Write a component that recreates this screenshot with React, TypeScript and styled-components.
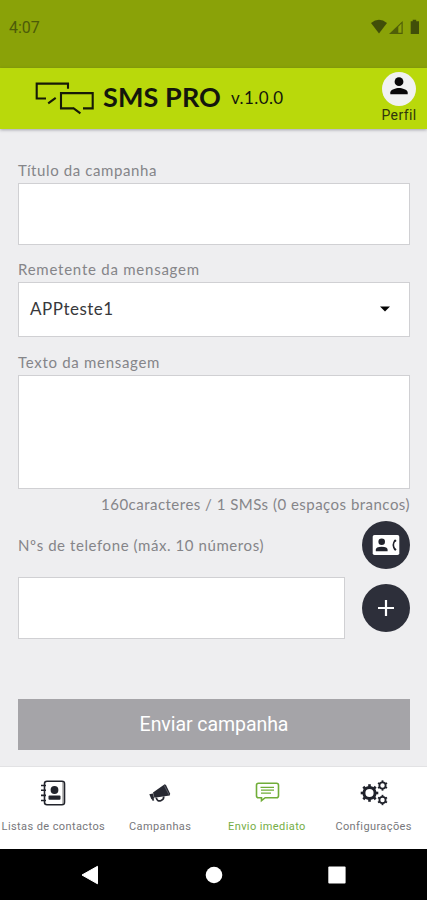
import React from "react";
import styled, { createGlobalStyle } from "styled-components";

const GlobalStyle = createGlobalStyle`
  * { box-sizing: border-box; }
  body { margin: 0; background: #eeeef0; }
`;

const Screen = styled.div`
  display: flex;
  flex-direction: column;
  width: 427px;
  height: 900px;
  overflow: hidden;
  background: #eeeef0;
  font-family: Lato, sans-serif;
`;

const StatusBar = styled.div`
  display: flex;
  justify-content: space-between;
  height: 68px;
  padding: 18px 7px 0 9px;
  background: #8aa208;
  color: #4d5b09;
  font: 16px/20px Roboto, sans-serif;
`;

const StatusIcons = styled.div`
  display: flex;
  height: 18px;
`;

const Header = styled.header`
  display: flex;
  align-items: flex-start;
  height: 61px;
  padding: 0 11px 0 35px;
  background: #b9d90b;
  color: #14160c;
  box-shadow: 0 1px 3px rgba(50, 50, 70, 0.4);
`;

const Logo = styled.svg`
  width: 60px;
  height: 34px;
  margin-top: 13px;
`;

const Brand = styled.h1`
  width: 128px;
  margin: 12px 0 0 8px;
  font: 700 27px/34px Lato, sans-serif;
  letter-spacing: 0.1px;
  white-space: nowrap;
`;

const Version = styled.span`
  margin-top: 20px;
  font-size: 17px;
  line-height: 20px;
  letter-spacing: 0.4px;
`;

const Profile = styled.div`
  display: flex;
  flex-direction: column;
  align-items: center;
  width: 34px;
  margin: 4px 0 0 auto;
  color: #2f360c;
  font: 14px/18px Roboto, sans-serif;
  letter-spacing: 0.4px;
`;

const Avatar = styled.span`
  display: flex;
  justify-content: center;
  width: 34px;
  height: 34px;
  border-radius: 50%;
  background: #f1f2f1;
`;

const Form = styled.main`
  display: flex;
  flex-direction: column;
  flex: 1;
  padding: 31px 17px 0 18px;
`;

const Label = styled.label<{ $spacing: number }>`
  height: 20px;
  font-size: 15px;
  line-height: 20px;
  letter-spacing: ${(p) => p.$spacing}px;
  color: #858589;
  white-space: nowrap;
`;

const Field = styled.div<{ $height: number; $gap: number }>`
  display: flex;
  align-items: center;
  justify-content: space-between;
  height: ${(p) => p.$height}px;
  margin: 3px 0 ${(p) => p.$gap}px;
  padding: 0 19px 2px 11px;
  border: 1px solid #d0d0d3;
  background: #fff;
  color: #38383b;
  font-size: 17px;
  letter-spacing: 0.5px;
`;

const Counter = styled.div`
  height: 20px;
  color: #858589;
  font-size: 15px;
  line-height: 20px;
  letter-spacing: 0.48px;
  text-align: right;
  white-space: nowrap;
`;

const PhoneLabelRow = styled.div`
  display: flex;
  align-items: center;
  justify-content: space-between;
  height: 48px;
  margin-top: 7px;
`;

const PhoneRow = styled.div`
  display: flex;
  align-items: center;
  justify-content: space-between;
  height: 62px;
  margin-top: 8px;
`;

const PhoneField = styled.div`
  width: 327px;
  height: 62px;
  border: 1px solid #d0d0d3;
  background: #fff;
`;

const RoundButton = styled.button`
  display: grid;
  place-items: center;
  width: 48px;
  height: 48px;
  padding: 0;
  border: 0;
  border-radius: 50%;
  background: #2d2f3a;
`;

const SubmitButton = styled.button`
  height: 51px;
  margin-top: 60px;
  padding: 0;
  border: 0;
  background: #a5a4a8;
  color: #fff;
  font: 19.5px/51px Roboto, sans-serif;
  letter-spacing: -0.06px;
`;

const TabBar = styled.nav`
  display: grid;
  grid-template-columns: repeat(4, 1fr);
  height: 83px;
  border-top: 1px solid #e2e2e4;
  background: #fff;
`;

const Tab = styled.div<{ $active?: boolean }>`
  display: flex;
  flex-direction: column;
  align-items: center;
  gap: 13px;
  padding-top: 12px;
  color: ${(p) => (p.$active ? "#75ad46" : "#77777b")};
  font: 11px/14px Roboto, sans-serif;
  letter-spacing: 0.4px;
  white-space: nowrap;
`;

const SystemBar = styled.div`
  display: flex;
  align-items: center;
  justify-content: space-between;
  height: 51px;
  padding: 0 81px;
  background: #000;
`;

const gears = [
  { x: 9.5, y: 14, r: 5.6, w: 3, tooth: 2.6, n: 8 },
  { x: 22.5, y: 6.5, r: 3.1, w: 1.8, tooth: 1.8, n: 6 },
  { x: 22.5, y: 21, r: 3.1, w: 1.8, tooth: 1.8, n: 6 },
];

const GearsIcon = () => (
  <svg width="28" height="28" viewBox="0 0 28 28" fill="none" stroke="#20222b">
    {gears.map((g) => (
      <g key={g.y} transform={`translate(${g.x} ${g.y})`}>
        <circle r={g.r} strokeWidth={g.w} />
        {Array.from({ length: g.n }, (_, i) => (
          <path
            key={i}
            d={`M0 ${-g.r}V${-g.r - g.w / 2 - g.tooth * 0.65}`}
            strokeWidth={g.tooth}
            transform={`rotate(${(360 / g.n) * i})`}
          />
        ))}
      </g>
    ))}
  </svg>
);

const ContactsIcon = () => (
  <svg width="28" height="28" viewBox="0 0 28 28" fill="none" stroke="#22242c">
    <rect x="5.5" y="2.3" width="20" height="23.5" rx="2.5" strokeWidth="1.6" />
    <path d="M24 3v22" stroke="#777" />
    <path d="M2 6.5h5M2 11.3h5M2 16.4h5M2 21.5h5" strokeWidth="1.6" />
    <circle cx="15.5" cy="11" r="3.9" fill="#22242c" stroke="none" />
    <rect x="9.5" y="16.5" width="12" height="4.3" rx="1" fill="#22242c" stroke="none" />
  </svg>
);

const MegaphoneIcon = () => (
  <svg width="28" height="28" viewBox="0 0 28 28">
    <path d="M3.3 15.3 7 14.6 8.2 19.5 5.4 20.2ZM7 13.6 18.7 5.2 20 6 24.2 14.7 23.7 16.4 8.4 18.8Z" fill="#272932" />
    <path d="M10.2 18.8q1.3 4.4 5 2.7 3-1.3 2.4-4M6.5 19.5l1 2.2" fill="none" stroke="#272932" strokeWidth="1.7" />
    <path d="M18.2 6.4 23 15.7" stroke="#70727a" strokeWidth=".7" />
  </svg>
);

const MessageIcon = () => (
  <svg width="28" height="28" viewBox="0 0 28 28" fill="none" stroke="#70ad38" strokeWidth="1.6">
    <path d="M5.5 4.2h18q2 0 2 2v10.5q0 2-2 2H12.2L8.5 21.6v-2.9h-3q-2 0-2-2V6.2q0-2 2-2Z" />
    <path d="M7.5 8.3h13.5M8 11.2h13M8 14.2h10" strokeWidth="1.3" />
  </svg>
);

export default function App() {
  return (
    <>
      <GlobalStyle />
      <Screen>
        <StatusBar>
          <span>4:07</span>
          <StatusIcons>
            <svg width="49" height="18" viewBox="0 0 49 18" fill="#414e09">
              <path d="M0 5q8-6.5 16 0L8 15.5Z" />
              <path d="M18 16 31.7 3v13Z" fillOpacity=".8" />
              <path d="M27.3 8.7 30.5 5.6V14.7H27.3Z" fill="#8ba30a" />
              <path d="M39.7 3.2h2V1.8h3.5v1.4H48V16h-8.3Z" />
            </svg>
          </StatusIcons>
        </StatusBar>
        <Header>
          <Logo viewBox="0 0 60 34" fill="none" stroke="#161a07" strokeWidth="2.1">
            <path d="M11 17.5H1.7V2.6H33V7.8M13.2 22.4 20.7 16.9M39 27.4H26V12.1H57.7V27.4H48M38 26.8 45.4 32.3" />
          </Logo>
          <Brand>SMS PRO</Brand>
          <Version>v.1.0.0</Version>
          <Profile>
            <Avatar>
              <svg width="34" height="34" viewBox="0 0 34 34" fill="#090909">
                <circle cx="17" cy="9.7" r="4.4" />
                <path d="M8.3 22.2v-1.8c0-3 5.8-4.5 8.7-4.5s8.7 1.5 8.7 4.5v1.8Z" />
              </svg>
            </Avatar>
            Perfil
          </Profile>
        </Header>
        <Form>
          <Label $spacing={0.6}>Título da campanha</Label>
          <Field $height={62} $gap={14} />
          <Label $spacing={0.76}>Remetente da mensagem</Label>
          <Field $height={55} $gap={15}>
            APPteste1
            <svg width="10" height="6" viewBox="0 0 10 6"><path d="M0 .5h10L5 5.5Z" fill="#050505" /></svg>
          </Field>
          <Label $spacing={0.7}>Texto da mensagem</Label>
          <Field $height={114} $gap={5} />
          <Counter>160caracteres / 1 SMSs (0 espaços brancos)</Counter>
          <PhoneLabelRow>
            <Label $spacing={0.58}>Nºs de telefone (máx. 10 números)</Label>
            <RoundButton aria-label="Contactos">
              <svg width="28" height="22" viewBox="0 0 28 22">
                <rect x=".7" y="1" width="26.6" height="20" rx="1.8" fill="#fff" />
                <g fill="#20222b">
                  <circle cx="9.7" cy="7.7" r="3.3" />
                  <path d="M3.8 17.3v-1.6q0-3 5.9-3t5.9 3v1.6Z" />
                </g>
                <path d="M23.4 6.1q-4.2 5 0 10" fill="none" stroke="#20222b" strokeWidth="1.6" />
                <path d="m22.2 7.4 1.9-1.2M22.2 14.8l1.9 1.2" stroke="#20222b" strokeWidth="1.8" />
              </svg>
            </RoundButton>
          </PhoneLabelRow>
          <PhoneRow>
            <PhoneField />
            <RoundButton aria-label="Adicionar">
              <svg width="18" height="18" viewBox="0 0 18 18"><path d="M9 1v16M1 9h16" stroke="#fff" strokeWidth="2.2" /></svg>
            </RoundButton>
          </PhoneRow>
          <SubmitButton>Enviar campanha</SubmitButton>
        </Form>
        <TabBar>
          <Tab><ContactsIcon />Listas de contactos</Tab>
          <Tab><MegaphoneIcon />Campanhas</Tab>
          <Tab $active><MessageIcon />Envio imediato</Tab>
          <Tab><GearsIcon />Configurações</Tab>
        </TabBar>
        <SystemBar>
          <svg width="18" height="20" viewBox="0 0 18 20" fill="#fff">
            <path d="M16.5 1.3v17.5L1 10Z" stroke="#fff" strokeLinejoin="round" />
          </svg>
          <svg width="18" height="18" viewBox="0 0 18 18" fill="#fff"><circle cx="9" cy="9" r="8.3" /></svg>
          <svg width="18" height="18" viewBox="0 0 18 18" fill="#fff"><rect x=".3" y=".5" width="17.3" height="17" rx="1" /></svg>
        </SystemBar>
      </Screen>
    </>
  );
}
